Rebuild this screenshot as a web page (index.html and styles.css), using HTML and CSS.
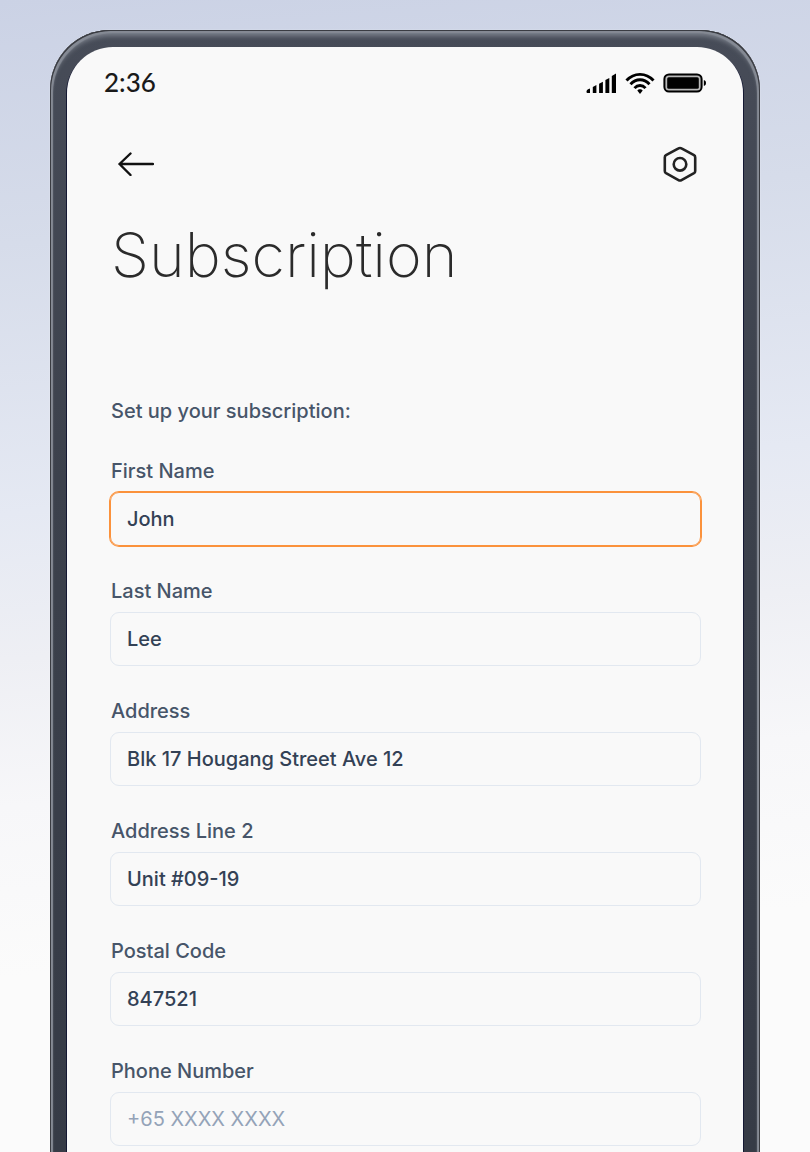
FILE: index.html
```html
<!DOCTYPE html>
<html lang="en">
<head>
<meta charset="utf-8">
<meta name="viewport" content="width=device-width, initial-scale=1">
<title>Subscription</title>
<link rel="stylesheet" href="styles.css">
</head>
<body>
<div class="phone">
  <main class="screen">
    <div class="status">
      <span class="time">2:36</span>
      <div class="indicators">
        <svg width="31" height="24" viewBox="0 0 31 24" aria-hidden="true">
          <path d="M0.500 20.500Q0.500 19 2 18.300L4 17.500V22H1.500Q0.500 22 0.500 21ZM6.800 22V16L10.400 14V22ZM13.100 22V12.700L16.900 10.700V22ZM19.400 22V9L23.300 7V22ZM25.800 22V5L30 2.500V22Z"/>
        </svg>
        <svg width="30" height="24" viewBox="0 0 30 24" fill="none" stroke="#000" stroke-width="2.900" aria-hidden="true">
          <path d="M1.500 9.500C9 1.300 21 1.300 28.500 9.500M5.500 13.300C11 7.300 19 7.300 24.500 13.300M9.500 17.100C12.600 13.600 17.400 13.600 20.500 17.100"/>
          <path d="M12.300 19.500C13.500 17.800 16.500 17.800 17.700 19.500L15 22.900Z" fill="#000" stroke="none"/>
        </svg>
        <svg width="44" height="24" viewBox="0 0 44 24" aria-hidden="true">
          <rect x="1.400" y="3.400" width="37.200" height="17.200" rx="4.600" fill="#b9b9b9" stroke="#000" stroke-width="2"/>
          <rect x="4.200" y="6.200" width="31.600" height="11.600" rx="1.500"/>
          <path d="M40.800 9.200H41.500Q43 9.700 43 12T41.500 14.800H40.800Z"/>
        </svg>
      </div>
    </div>
    <header class="toolbar">
      <button class="icon-button" type="button" aria-label="Back">
        <svg width="36" height="24" viewBox="0 0 36 24" fill="none" stroke="#111" stroke-width="2.400" stroke-linecap="round" stroke-linejoin="round" aria-hidden="true">
          <path d="M35 12H1.500M12.500 1.500L1.500 12L12.500 23"/>
        </svg>
      </button>
      <button class="icon-button" type="button" aria-label="Settings">
        <svg width="34" height="36" viewBox="0 0 34 36" fill="none" stroke="#222" stroke-width="2.600" stroke-linejoin="round" aria-hidden="true">
          <path d="M15.500 2.400Q17 1.500 18.500 2.400L31 9.200Q32.200 9.900 32.200 11.400V25Q32.200 26.500 31 27.200L18.500 34.100Q17 35 15.500 34.100L3 27.200Q1.800 26.500 1.800 25V11.400Q1.800 9.900 3 9.200Z"/>
          <circle cx="17" cy="18.300" r="6.300"/>
        </svg>
      </button>
    </header>
    <h1 class="title">Subscription</h1>
    <form class="form">
      <p class="intro">Set up your subscription:</p>
      <div class="field">
        <label class="label" for="first">First Name</label>
        <input class="input input-active" id="first" type="text" value="John">
      </div>
      <div class="field">
        <label class="label" for="last">Last Name</label>
        <input class="input" id="last" type="text" value="Lee">
      </div>
      <div class="field">
        <label class="label" for="address">Address</label>
        <input class="input" id="address" type="text" value="Blk 17 Hougang Street Ave 12">
      </div>
      <div class="field">
        <label class="label" for="address2">Address Line 2</label>
        <input class="input" id="address2" type="text" value="Unit #09-19">
      </div>
      <div class="field">
        <label class="label" for="postal">Postal Code</label>
        <input class="input" id="postal" type="text" value="847521">
      </div>
      <div class="field">
        <label class="label" for="phone">Phone Number</label>
        <input class="input" id="phone" type="tel" placeholder="+65 XXXX XXXX">
      </div>
    </form>
  </main>
</div>
</body>
</html>
```
FILE: styles.css
```css
* {
  box-sizing: border-box;
}

body {
  margin: 0;
  min-height: 100vh;
  padding: 30px 50px 0;
  font-family: Inter, "Liberation Sans", sans-serif;
  background: linear-gradient(175deg, #cbd2e5 0%, #d6dcea 20%, #e5e9f3 42%, #eeeff4 54%, #f7f7f9 66%, #fbfbfb 80%);
}

.phone {
  padding: 17px 17px 0;
  border-radius: 60px 60px 0 0;
  background: linear-gradient(#474c58, #3c414c 40%, #363b46);
  box-shadow:
    0 0 1px #ffffff,
    inset 1px 1px 0 #3a3c42,
    inset -1px 1px 0 #3a3c42,
    inset 3px 3px 1px #858a94,
    inset -3px 3px 1px #858a94,
    inset 0 6px 5px #7b808b;
}

.screen {
  padding: 0 42px 6px 43px;
  border-radius: 46px 46px 0 0;
  background: #f9f9f9;
  box-shadow: -1px 1px 0 #141833, 1px 1px 0 #141833;
}

.status {
  display: flex;
  align-items: center;
  justify-content: space-between;
  height: 72px;
  margin: 0 -6px;
}

.time {
  padding-bottom: 2px;
  font-family: Lato, sans-serif;
  font-size: 26px;
  font-weight: 500;
  line-height: 32px;
  color: #1a1a1a;
}

.indicators {
  display: flex;
  gap: 8px;
}

.toolbar {
  display: flex;
  align-items: center;
  justify-content: space-between;
  height: 90px;
  padding: 0 4px 0 8px;
}

.icon-button {
  display: flex;
  padding: 0;
  border: 0;
  background: none;
  cursor: pointer;
}

.title {
  margin: 10px 0 107px;
  padding-left: 1px;
  font-size: 61px;
  font-weight: 200;
  line-height: 72px;
  color: #2b2b2b;
}

.intro,
.label {
  padding-left: 1px;
  font-size: 20px;
  font-weight: 500;
  line-height: 26px;
  color: #475569;
}

.intro {
  margin: 0 0 2px;
}

.form {
  display: flex;
  flex-direction: column;
  gap: 32px;
}

.field {
  display: flex;
  flex-direction: column;
  gap: 8px;
}

.input {
  width: 100%;
  height: 54px;
  padding: 0 16px;
  border: 1px solid #e2e8f0;
  border-radius: 9px;
  background: transparent;
  font: inherit;
  font-size: 20px;
  font-weight: 500;
  color: #334155;
  outline: none;
}

.input::placeholder {
  font-weight: 400;
  color: #94a3b8;
  opacity: 1;
}

.input-active,
.input:focus {
  border-color: #fb923c;
  box-shadow: 0 0 0 1px #fb923c;
}
```
